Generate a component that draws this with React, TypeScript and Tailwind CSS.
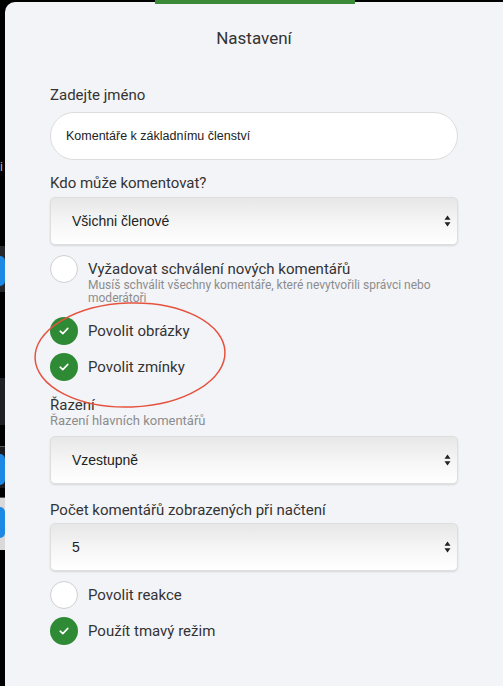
import { useState } from "react";

const SelectArrows = () => (
  <svg width="7" height="12" viewBox="0 0 7 12" className="shrink-0">
    <path d="M3.5 0.5 L6.5 4.8 L0.5 4.8 Z" fill="#222" />
    <path d="M3.5 11.5 L6.5 7.2 L0.5 7.2 Z" fill="#222" />
  </svg>
);

const FakeSelect = ({ value }: { value: string }) => (
  <div className="flex h-[48px] items-center justify-between rounded-[5px] border border-[#dedede] bg-linear-to-b from-[#e7e7e7] via-[#f5f5f5] to-white pl-[21px] pr-[6px] shadow-[0_1px_2px_rgba(0,0,0,0.12)]">
    <span className="font-['Liberation_Sans',Arial,sans-serif] text-[14px] text-[#222]">{value}</span>
    <SelectArrows />
  </div>
);

const Round = ({ checked }: { checked: boolean }) =>
  checked ? (
    <span className="flex size-[28px] shrink-0 items-center justify-center rounded-full bg-[#2f8a36]">
      <svg width="10" height="8" viewBox="0 0 10 8">
        <path d="M1.2 4.2 L3.8 6.6 L8.8 1.4" fill="none" stroke="#fff" strokeWidth="1.6" strokeLinecap="round" strokeLinejoin="round" />
      </svg>
    </span>
  ) : (
    <span className="size-[28px] shrink-0 rounded-full border border-[#cfcfcf] bg-white" />
  );

const Toggle = ({ label, checked, hint }: { label: string; checked: boolean; hint?: string }) => (
  <div className="flex items-start gap-[10px]">
    <Round checked={checked} />
    <div className="flex flex-col pt-[4px]">
      <span className="text-[15px] leading-5 text-[#333]">{label}</span>
      {hint && <span className="text-[12px] leading-[13px] text-[#8c8c8c]">{hint}</span>}
    </div>
  </div>
);

export default function App() {
  const [name] = useState("Komentáře k základnímu členství");

  return (
    <div className="relative flex h-[686px] w-[503px] overflow-hidden bg-black font-['Roboto',sans-serif]">
      {/* page behind the dialog */}
      <div className="flex w-[5px] shrink-0 flex-col">
        <div className="h-[160px]" />
        <div className="h-[14px] overflow-hidden text-[12px] leading-[14px] text-[#bbb]">i</div>
        <div className="h-[72px]" />
        <div className="flex h-[46px] flex-col bg-[#26272b] pt-[10px]">
          <div className="h-[30px] rounded-r-full bg-[#1e88e5]" />
        </div>
        <div className="h-[86px]" />
        <div className="h-[47px] bg-[#1f2023]" />
        <div className="h-[21px]" />
        <div className="flex h-[42px] flex-col border-t border-[#555] bg-[#1b1c1f] pt-[7px]">
          <div className="h-[31px] rounded-r-full bg-[#1e88e5]" />
        </div>
        <div className="h-[10px] border-b border-[#555]" />
        <div className="flex h-[52px] flex-col bg-[#d9d9d9] pt-[9px]">
          <div className="h-[31px] rounded-r-full bg-[#1e88e5]" />
        </div>
      </div>

      <div className="mt-[2px] flex flex-1 flex-col rounded-tl-[10px] bg-[#f3f4f8] px-[45px] pt-[24px]">
        <h2 className="h-6 text-center text-[17px] leading-6 text-[#333]">Nastavení</h2>

        <label className="mt-[35px] text-[15px] leading-5 text-[#333]">Zadejte jméno</label>
        <div className="mt-[7px] flex h-[48px] items-center rounded-full border border-[#dcdcdc] bg-white pl-[15px]">
          <span className="font-['Liberation_Sans',Arial,sans-serif] text-[12.5px] text-[#222]">{name}</span>
        </div>

        <label className="mt-[13px] text-[15px] leading-5 text-[#333]">Kdo může komentovat?</label>
        <div className="mt-[4px]">
          <FakeSelect value="Všichni členové" />
        </div>

        <div className="mt-[10px]">
          <Toggle
            label="Vyžadovat schválení nových komentářů"
            checked={false}
            hint="Musíš schválit všechny komentáře, které nevytvořili správci nebo moderátoři"
          />
        </div>
        <div className="mt-[12px]">
          <Toggle label="Povolit obrázky" checked />
        </div>
        <div className="mt-[8px]">
          <Toggle label="Povolit zmínky" checked />
        </div>

        <label className="mt-[15px] text-[15px] leading-[18px] text-[#333]">Řazení</label>
        <span className="text-[13px] leading-[14px] text-[#8c8c8c]">Řazení hlavních komentářů</span>
        <div className="mt-[8px]">
          <FakeSelect value="Vzestupně" />
        </div>

        <label className="mt-[16px] text-[15px] leading-5 text-[#333]">Počet komentářů zobrazených při načtení</label>
        <div className="mt-[3px]">
          <FakeSelect value="5" />
        </div>

        <div className="mt-[10px]">
          <Toggle label="Povolit reakce" checked={false} />
        </div>
        <div className="mt-[8px]">
          <Toggle label="Použít tmavý režim" checked />
        </div>
      </div>

      {/* green tab peeking above the dialog */}
      <div className="absolute left-[155px] top-0 h-[4px] w-[200px] bg-[#3a8a3a]" />

      {/* red hand-drawn annotation */}
      <svg className="pointer-events-none absolute left-0 top-0" width="503" height="686">
        <ellipse cx="130" cy="355" rx="95" ry="52" transform="rotate(-2 130 355)" fill="none" stroke="#e5533f" strokeWidth="1.5" />
      </svg>
    </div>
  );
}
